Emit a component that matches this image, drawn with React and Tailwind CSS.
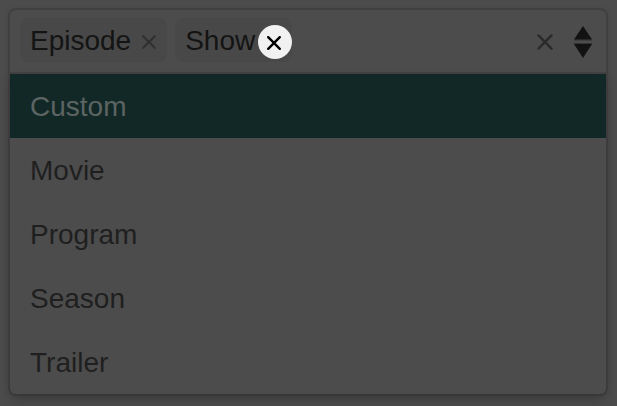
import React from 'react';

const options = ['Custom', 'Movie', 'Program', 'Season', 'Trailer'];

function Cross({ className, strokeWidth = 2.2 }) {
    return (
        <svg viewBox="0 0 16 16" className={className} fill="none" stroke="currentColor" strokeWidth={strokeWidth} strokeLinecap="round">
            <path d="M2.2 2.2 13.8 13.8M13.8 2.2 2.2 13.8" />
        </svg>
    );
}

function Tag({ label, children }) {
    return (
        <div className="relative flex h-11 items-center rounded-lg bg-[#484848] pl-2.5 text-[#141414]">
            <span className="pt-0.5 leading-8">{label}</span>
            {children}
        </div>
    );
}

export default function App() {
    return (
        <div className="h-[406px] w-[617px] overflow-hidden bg-[#4c4c4c] p-2 font-['Liberation_Sans',Arial,sans-serif] text-[28px]">
            <div className="w-[600px] rounded-[8px] border-2 border-[#404040] bg-[#4c4c4c] shadow-[0_1px_5px_rgba(0,0,0,0.1)]">
                {/* Selected values */}
                <div className="flex h-16 items-center border-b-2 border-[#424242] pb-0.5 pl-2.5 pr-3.5">
                    <div className="flex gap-2">
                        <Tag label="Episode">
                            <Cross className="ml-2.5 mr-2.5 mt-[3px] h-4 w-4 text-[#303030]" />
                        </Tag>
                        <Tag label="Show">
                            <div className="w-[37px]" />
                            {/* Highlighted remove button */}
                            <span className="absolute right-0 top-[7px] flex h-[34px] w-[34px] items-center justify-center rounded-full bg-[#f1f1f1] text-black">
                                <Cross className="mr-0.5 mt-px h-4 w-4" strokeWidth={2.4} />
                            </span>
                        </Tag>
                    </div>
                    <Cross className="ml-auto mt-1 h-[18px] w-[18px] text-[#2b2b2b]" />
                    <svg viewBox="0 0 18 34" className="ml-5 mt-1 h-[34px] w-[18px]" fill="#121212">
                        <path d="M9 1 18 14.5H0Z" />
                        <path d="M0 19H18L9 33Z" />
                        <path d="M0 14.5H18V15.5H0ZM0 18H18V19H0Z" opacity=".4" />
                    </svg>
                </div>

                {/* Options */}
                <ul className="rounded-b-[6px] text-[#1f1f1f] shadow-[0_8px_14px_rgba(0,0,0,0.15)]">
                    {options.map((option, index) => (
                        <li
                            key={option}
                            className={`flex h-16 items-center pl-5 pt-0.5 ${index === 0 ? 'bg-[#122826] text-[#5c6463]' : 'bg-[#4c4c4c] last:rounded-b-[6px]'}`}
                        >
                            {option}
                        </li>
                    ))}
                </ul>
            </div>
        </div>
    );
}
